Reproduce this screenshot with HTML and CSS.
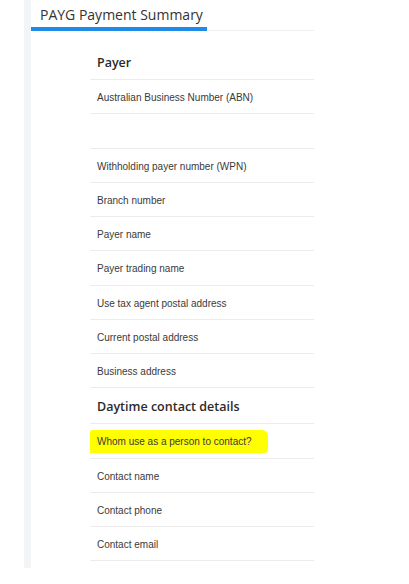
FILE: index.html
```html
<!DOCTYPE html>
<html lang="en">
<head>
    <meta charset="UTF-8">
    <meta name="viewport" content="width=device-width, initial-scale=1.0">
    <title>PAYG Payment Summary</title>
    <link rel="stylesheet" href="styles.css">
</head>
<body>
    <div class="page">
        <div class="tabs">
            <div class="tab active">PAYG Payment Summary</div>
        </div>
        <div class="content">
            <div class="row heading">Payer</div>
            <div class="row">Australian Business Number (ABN)</div>
            <div class="row"></div>
            <div class="row">Withholding payer number (WPN)</div>
            <div class="row">Branch number</div>
            <div class="row">Payer name</div>
            <div class="row">Payer trading name</div>
            <div class="row">Use tax agent postal address</div>
            <div class="row">Current postal address</div>
            <div class="row">Business address</div>
            <div class="row heading">Daytime contact details</div>
            <div class="row"><span class="marker">Whom use as a person to contact?</span></div>
            <div class="row">Contact name</div>
            <div class="row">Contact phone</div>
            <div class="row">Contact email</div>
        </div>
    </div>
</body>
</html>
```

FILE: styles.css
```css
body {
    margin: 0;
    background-color: #fff;
    font-family: "Liberation Sans", Arial, sans-serif;
    color: #333;
}

.page {
    margin-left: 24px;
    width: 283px;
    height: 568px;
    border-left: 7px solid #f3f4f6;
}

.tabs {
    height: 30px;
    border-bottom: 1px solid #eeeeee;
    display: flex;
}

.tab {
    width: 167px;
    padding: 3px 0 0 9px;
    font-family: "Open Sans", sans-serif;
    font-size: 14px;
    line-height: 23px;
    white-space: nowrap;
    color: #333;
}

.tab.active {
    border-bottom: 4px solid #1e8ce6;
    margin-bottom: -1px;
}

.content {
    padding: 13px 0 0 59px;
}

.row {
    box-sizing: border-box;
    height: 34.25px;
    border-bottom: 1px solid #ececec;
    padding: 2px 0 0 7px;
    display: flex;
    align-items: center;
    font-size: 10px;
    color: #3a3a3a;
}

.row.heading {
    height: 36px;
    font-family: "Open Sans", sans-serif;
    font-weight: 600;
    font-size: 12.5px;
    color: #2b2b2b;
}

.marker {
    margin-left: -7px;
    padding: 6px 16px 6px 7px;
    background-color: #ffff00;
    border-radius: 2px 6px 4px 1px;
}
```
